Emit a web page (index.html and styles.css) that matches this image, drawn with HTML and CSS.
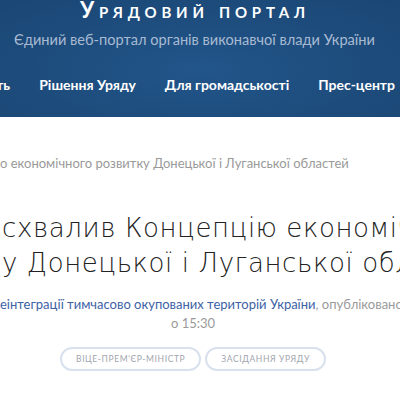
FILE: index.html
```html
<!DOCTYPE html>
<html lang="uk">
<head>
  <meta charset="UTF-8">
  <meta name="viewport" content="width=device-width, initial-scale=1.0">
  <title>Урядовий портал</title>
  <link rel="stylesheet" href="styles.css">
</head>
<body>
  <header class="site-header">
    <div class="brand">Урядовий портал</div>
    <div class="tagline">Єдиний веб-портал органів виконавчої влади України</div>
    <nav class="main-nav">
      <a href="#">Діяльність</a>
      <a href="#">Рішення Уряду</a>
      <a href="#">Для громадськості</a>
      <a href="#">Прес-центр</a>
    </nav>
  </header>

  <main class="article">
    <div class="crumbs">о економічного розвитку Донецької і Луганської областей</div>

    <h1 class="headline">
      <span class="line">схвалив Концепцію економічного</span>
      <span class="line">у Донецької і Луганської областей</span>
    </h1>

    <p class="meta">
      <span class="line"><a href="#">еінтеграції тимчасово окупованих територій України</a>, опубліковано 22 листопада 2017</span>
      <span class="time">о 15:30</span>
    </p>

    <div class="tags">
      <a class="tag" href="#">Віце-прем'єр-міністр</a>
      <a class="tag" href="#">Засідання Уряду</a>
    </div>
  </main>
</body>
</html>
```

FILE: styles.css
```css
body {
  margin: 0;
  font-family: 'Lato', 'Noto Sans', sans-serif;
  background: #fff;
  color: #222;
  width: 400px;
  height: 400px;
  overflow: hidden;
}

.site-header {
  background: radial-gradient(ellipse at 50% 60%, #22558a 0%, #1d4c7c 60%, #1a4674 100%);
  height: 117px;
  overflow: hidden;
  color: #fff;
}

.brand {
  width: 390px;
  text-align: center;
  font-size: 22px;
  font-weight: 700;
  font-variant: small-caps;
  letter-spacing: 4.8px;
  line-height: 22px;
  margin-top: -1px;
}

.tagline {
  width: 389px;
  text-align: center;
  font-size: 14.6px;
  color: #a8bad2;
  margin-top: 10px;
  line-height: 18px;
}

.main-nav {
  display: flex;
  justify-content: flex-end;
  gap: 29px;
  white-space: nowrap;
  padding-right: 5px;
  margin-top: 27px;
  overflow: hidden;
}

.main-nav a {
  color: #fff;
  text-decoration: none;
  font-size: 14px;
  font-weight: 700;
  line-height: 18px;
  flex-shrink: 0;
}

.article {
  width: 386px;
}

.crumbs {
  margin-top: 38px;
  font-size: 13px;
  color: #9a9a9a;
  line-height: 16px;
  white-space: nowrap;
}

.headline {
  margin: 40px 0 0;
  font-family: 'DejaVu Sans', sans-serif;
  font-weight: 200;
  font-size: 26px;
  letter-spacing: 0.6px;
  line-height: 35px;
  color: #222;
  white-space: nowrap;
  overflow: hidden;
  width: 400px;
}

.headline .line {
  display: block;
  padding-left: 2px;
}

.meta {
  margin: 14px 0 0;
  font-size: 13px;
  line-height: 19px;
  color: #9a9a9a;
  width: 400px;
  overflow: hidden;
  white-space: nowrap;
}

.meta .line {
  display: block;
}

.meta a {
  color: #3d62a5;
  text-decoration: none;
}

.meta .time {
  display: block;
  width: 386px;
  text-align: center;
}

.tags {
  display: flex;
  justify-content: center;
  gap: 4px;
  margin-top: 14px;
}

.tag {
  border: 2px solid #d9e1ef;
  border-radius: 12px;
  padding: 0 14px;
  height: 20px;
  line-height: 20px;
  font-size: 8.5px;
  letter-spacing: 0.6px;
  text-transform: uppercase;
  color: #9fa5ae;
  text-decoration: none;
}
```
